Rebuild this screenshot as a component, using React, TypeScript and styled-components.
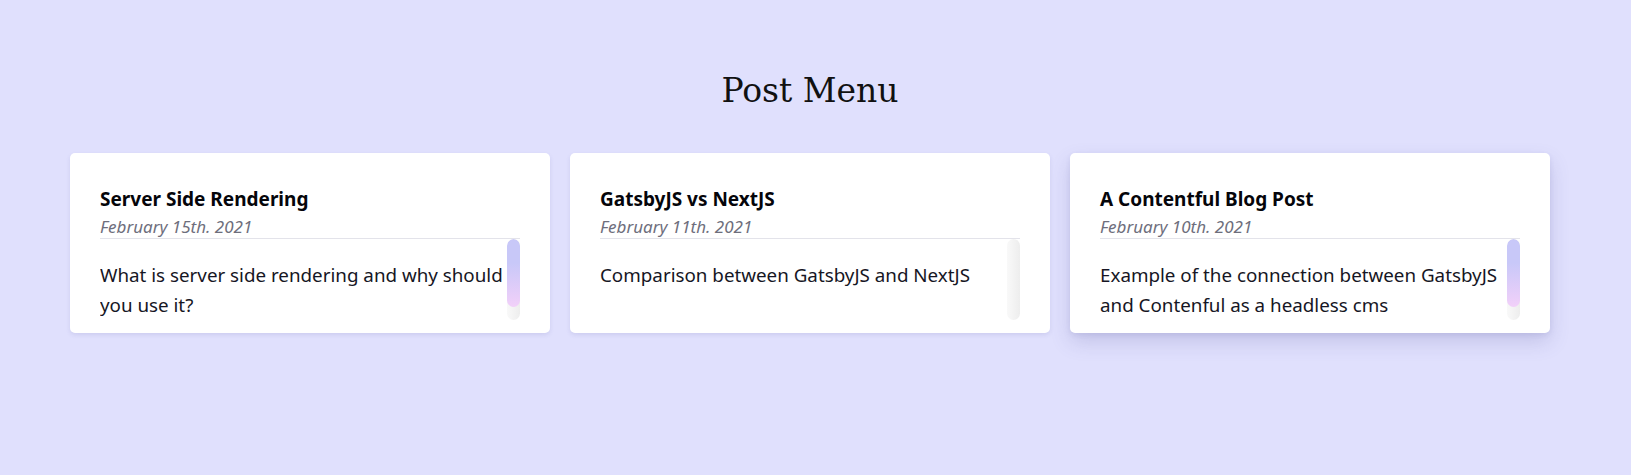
import React from "react";
import styled, { createGlobalStyle } from "styled-components";

const GlobalStyle = createGlobalStyle`
  html, body {
    margin: 0;
    padding: 0;
    background: #e0e0fd;
  }
  body {
    font-family: "Noto Sans", "Open Sans", sans-serif;
  }
`;

const Page = styled.main`
  box-sizing: border-box;
  width: 100%;
  min-height: 475px;
  padding: 67px 81px 0 70px;
  background: #e0e0fd;
`;

const Heading = styled.h1`
  margin: 0 0 38px;
  text-align: center;
  font-family: "DejaVu Serif", "Liberation Serif", serif;
  font-weight: 400;
  font-size: 33px;
  line-height: 48px;
  color: #111111;
`;

const CardGrid = styled.section`
  display: grid;
  grid-template-columns: repeat(3, 1fr);
  gap: 20px;
`;

interface CardProps {
  raised?: boolean;
}
const Card = styled.article<CardProps>`
  box-sizing: border-box;
  background: #ffffff;
  border-radius: 5px;
  padding: 33px 30px 13px;
  box-shadow: ${(props) =>
    props.raised
      ? "0px 9px 20px rgba(80, 80, 150, 0.2), 0px 2px 5px rgba(80, 80, 150, 0.1)"
      : "0px 2px 4px rgba(90, 90, 160, 0.14)"};
`;

const CardHeader = styled.header`
  border-bottom: 1px solid #e3e3ea;
`;

const Title = styled.h3`
  margin: 0;
  font-size: 19px;
  font-weight: 700;
  line-height: 27px;
  color: #05050a;
`;

const Date = styled.span`
  display: block;
  margin-top: 2px;
  font-size: 17px;
  font-style: italic;
  line-height: 23px;
  color: #6e6e7c;
`;

const Body = styled.div`
  display: flex;
  height: 81px;
`;

const Excerpt = styled.p`
  flex: 1;
  margin: 21px 0 0;
  overflow: hidden;
  font-size: 18.8px;
  line-height: 30px;
  color: #161624;
`;

const ScrollTrack = styled.div`
  flex: 0 0 13px;
  border-radius: 7px;
  background: linear-gradient(to right, #f9f9f9, #ededed);
  overflow: hidden;
`;

interface ThumbProps {
  size: number;
}
const ScrollThumb = styled.div<ThumbProps>`
  height: ${(props) => props.size}%;
  border-radius: 7px;
  background: linear-gradient(to bottom, #c8c8f8 35%, #f2d0f9 100%);
`;

interface Post {
  title: string;
  date: string;
  excerpt: string;
  thumb: number;
}

const posts: Post[] = [
  {
    title: "Server Side Rendering",
    date: "February 15th. 2021",
    excerpt: "What is server side rendering and why should you use it?",
    thumb: 84
  },
  {
    title: "GatsbyJS vs NextJS",
    date: "February 11th. 2021",
    excerpt: "Comparison between GatsbyJS and NextJS",
    thumb: 0
  },
  {
    title: "A Contentful Blog Post",
    date: "February 10th. 2021",
    excerpt:
      "Example of the connection between GatsbyJS and Contenful as a headless cms",
    thumb: 84
  }
];

export default function App() {
  return (
    <>
      <GlobalStyle />
      <Page>
        <Heading>Post Menu</Heading>
        <CardGrid>
          {posts.map((post, key) => (
            <Card key={`post-${key}`} raised={key === 2}>
              <CardHeader>
                <Title>{post.title}</Title>
                <Date>{post.date}</Date>
              </CardHeader>
              <Body>
                <Excerpt>{post.excerpt}</Excerpt>
                <ScrollTrack>
                  {post.thumb > 0 && <ScrollThumb size={post.thumb} />}
                </ScrollTrack>
              </Body>
            </Card>
          ))}
        </CardGrid>
      </Page>
    </>
  );
}
